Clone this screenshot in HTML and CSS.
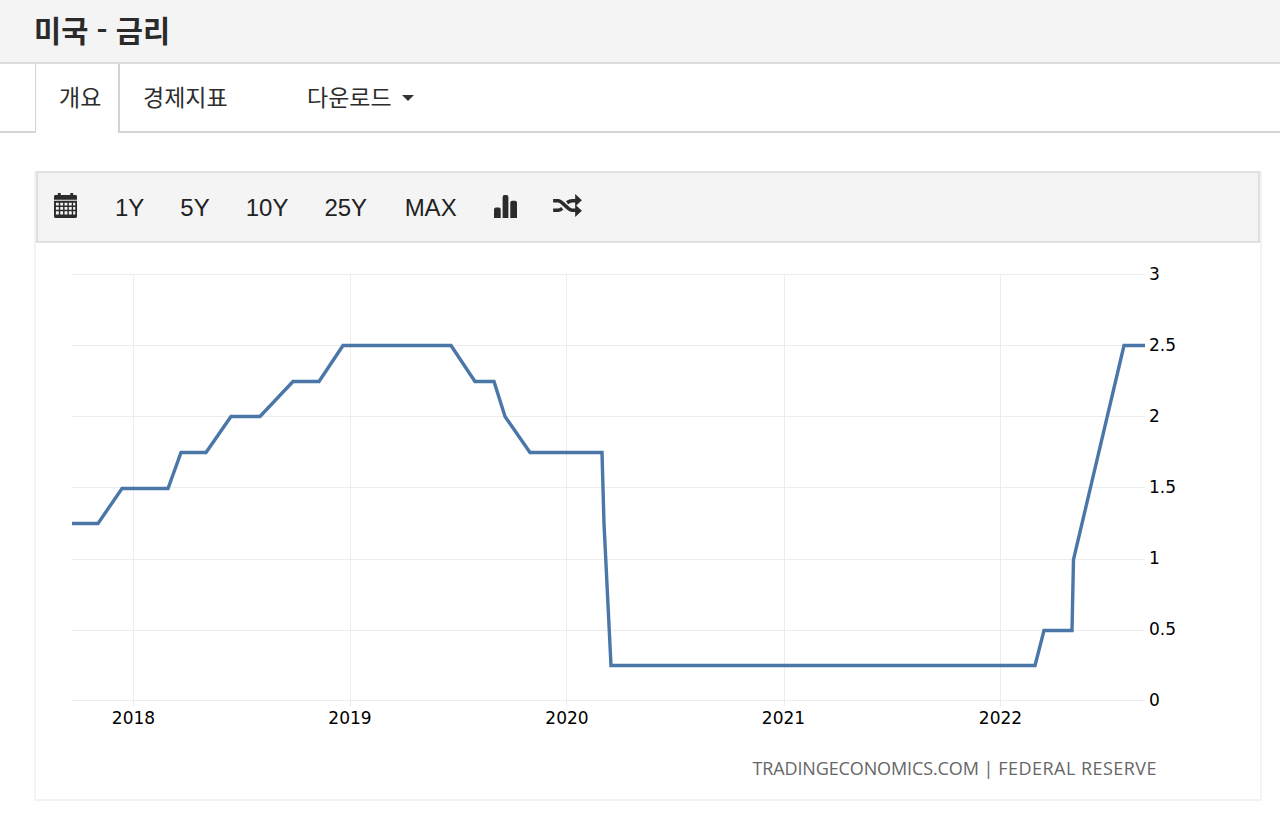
FILE: index.html
```html
<!DOCTYPE html>
<html lang="ko">
<head>
<meta charset="utf-8">
<title>미국 - 금리</title>
<link rel="stylesheet" href="styles.css">
</head>
<body>
<header class="title-bar"><h1 class="title">미국 - 금리</h1></header>
<nav class="tabs">
  <a class="tab tab-active">개요</a>
  <a class="tab tab-econ">경제지표</a>
  <a class="tab tab-down">다운로드<span class="caret"></span></a>
</nav>
<section class="card">
  <div class="toolbar">
    <svg class="icon icon-cal" viewBox="0 0 24 26" aria-hidden="true">
      <path fill="#2b2b2b" fill-rule="evenodd" d="M4 0h3v2h10V0h3v2h2.500A1.500 1.500 0 0 1 24 3.500V7H0V3.500A1.500 1.500 0 0 1 1.500 2H4zM0 8h24v16.500a1.500 1.500 0 0 1-1.500 1.500h-21A1.500 1.500 0 0 1 0 24.500zM2 10v3h3v-3zM6.500 10v3h3v-3zM11 10v3h3v-3zM15.500 10v3h3v-3zM20 10v3h2.200v-3zM2 14.500v3h3v-3zM6.500 14.500v3h3v-3zM11 14.500v3h3v-3zM15.500 14.500v3h3v-3zM20 14.500v3h2.200v-3zM2 19v3.500h3V19zM6.500 19v3.500h3V19zM11 19v3.500h3V19zM15.500 19v3.500h3V19zM20 19v3.500h2.200V19z"/>
    </svg>
    <a class="range">1Y</a>
    <a class="range">5Y</a>
    <a class="range">10Y</a>
    <a class="range">25Y</a>
    <a class="range range-max">MAX</a>
    <svg class="icon icon-bars" viewBox="0 0 24 24" aria-hidden="true">
      <path fill="#2b2b2b" d="M0 15a2 2 0 0 1 2-2h3a2 2 0 0 1 2 2v9H0zM9 2a2 2 0 0 1 2-2h2a2 2 0 0 1 2 2v22H9zM17 8a2 2 0 0 1 2-2h3a2 2 0 0 1 2 2v16h-7z"/>
    </svg>
    <svg class="icon icon-shuffle" viewBox="0 0 30 24" aria-hidden="true">
      <path fill="none" stroke="#2b2b2b" stroke-width="3.800" d="M0 7h5c5 0 10 10 15 10h5M0 17h5c1.500 0 3-.8 4.500-2M14.500 9c1.800-1.200 3.500-2 5.500-2h5"/>
      <path fill="#2b2b2b" d="M23 0l7 6.500-7 6.500zM23 11l7 6.500-7 6.500z"/>
    </svg>
  </div>
  <svg class="chart" viewBox="36 243 1224 555" role="img" aria-label="미국 금리 차트">
    <g class="grid">
      <line x1="72" x2="1145" y1="274.500" y2="274.500"/>
      <line x1="72" x2="1145" y1="345.500" y2="345.500"/>
      <line x1="72" x2="1145" y1="416.500" y2="416.500"/>
      <line x1="72" x2="1145" y1="487.500" y2="487.500"/>
      <line x1="72" x2="1145" y1="559.500" y2="559.500"/>
      <line x1="72" x2="1145" y1="630.500" y2="630.500"/>
      <line x1="72" x2="1145" y1="700.500" y2="700.500"/>
      <line x1="133.500" x2="133.500" y1="274" y2="706"/>
      <line x1="350.500" x2="350.500" y1="274" y2="706"/>
      <line x1="566.500" x2="566.500" y1="274" y2="706"/>
      <line x1="784.500" x2="784.500" y1="274" y2="706"/>
      <line x1="1000.500" x2="1000.500" y1="274" y2="706"/>
    </g>
    <polyline class="series" points="72,523.500 98,523.500 122,488.500 168,488.500 181,452.500 206,452.500 231,416.500 260,416.500 293,381.500 319,381.500 343,345.500 451,345.500 475,381.500 494,381.500 505,416.500 530,452.500 602,452.500 604,523.500 611,665.500 1035,665.500 1044,630.500 1072,630.500 1073.500,559.500 1124,345.500 1145,345.500"/>
    <g class="axis">
      <text x="1149" y="280">3</text>
      <text x="1149" y="351">2.5</text>
      <text x="1149" y="422">2</text>
      <text x="1149" y="493">1.5</text>
      <text x="1149" y="564">1</text>
      <text x="1149" y="635">0.5</text>
      <text x="1149" y="706">0</text>
    </g>
    <g class="axis axis-x">
      <text x="133.500" y="724">2018</text>
      <text x="350" y="724">2019</text>
      <text x="567" y="724">2020</text>
      <text x="783.500" y="724">2021</text>
      <text x="1000.500" y="724">2022</text>
    </g>
    <text class="credit" x="1157" y="775"><tspan class="credit-site">TRADINGECONOMICS.COM</tspan> | <tspan class="credit-source">FEDERAL RESERVE</tspan></text>
  </svg>
</section>
</body>
</html>
```
FILE: styles.css
```css
* { box-sizing: border-box; }
html, body { margin: 0; padding: 0; background: #fff; }
body {
  height: 818px;
  overflow: hidden;
  font-family: "Liberation Sans", "Noto Sans CJK KR", sans-serif;
  color: #222;
}
.title-bar {
  height: 64px;
  padding-left: 34px;
  background: #f4f4f4;
  border-bottom: 2px solid #dcdcdc;
}
.title {
  margin: 0;
  font-size: 29.500px;
  font-weight: 700;
  line-height: 58px;
  color: #2a2a2a;
  font-family: "Noto Sans CJK KR", sans-serif;
}
.tabs {
  display: flex;
  height: 69px;
  padding-left: 35px;
  border-bottom: 2px solid #d4d4d4;
  font-family: "Noto Sans CJK KR", sans-serif;
  font-size: 23px;
  line-height: 64px;
  color: #2d2d2d;
}
.tab { display: block; }
.tab-active {
  width: 85px;
  height: 69px;
  padding-left: 23px;
  background: #fff;
  border-left: 1px solid #d4d4d4;
  border-right: 2px solid #d4d4d4;
}
.tab-econ { margin-left: 23px; width: 164px; }
.tab-down { display: flex; align-items: center; height: 64px; }
.caret {
  width: 0;
  height: 0;
  margin-left: 10px;
  margin-top: 4px;
  border-left: 6.500px solid transparent;
  border-right: 6.500px solid transparent;
  border-top: 6.500px solid #333;
}
.card {
  width: 1228px;
  height: 630px;
  margin: 38px 0 0 34px;
  border: 2px solid #f3f3f3;
  border-top-width: 0;
}
.toolbar {
  display: flex;
  align-items: center;
  height: 72px;
  padding-left: 16px;
  background: #f4f4f4;
  border: 2px solid #e0e0e0;
}
.icon { display: block; flex: none; }
.icon-cal { width: 23px; height: 25px; margin-top: -3px; }
.icon-bars { width: 23px; height: 23px; margin: -1px 0 0 37.500px; }
.icon-shuffle { width: 29px; height: 23px; margin: -3px 0 0 36px; }
.range {
  margin: 2px 0 0 36px;
  font-size: 24px;
  line-height: 28px;
  color: #222;
}
.icon-cal + .range { margin-left: 38px; }
.range-max { margin-left: 37.500px; }
.chart { display: block; width: 1224px; height: 555px; }
.grid line { stroke: #ececec; stroke-width: 1; shape-rendering: crispEdges; }
.series {
  fill: none;
  stroke: #4a76a8;
  stroke-width: 3.400;
  stroke-linejoin: miter;
}
.axis text {
  font-family: "DejaVu Sans", sans-serif;
  font-size: 17px;
  fill: #000;
}
.axis-x text { text-anchor: middle; }
.credit {
  font-family: "Open Sans", sans-serif;
  font-size: 18px;
  letter-spacing: 0.13px;
  fill: #666;
  text-anchor: end;
}
.credit-site { letter-spacing: -0.12px; }
.credit-source { letter-spacing: 0.46px; }
```
